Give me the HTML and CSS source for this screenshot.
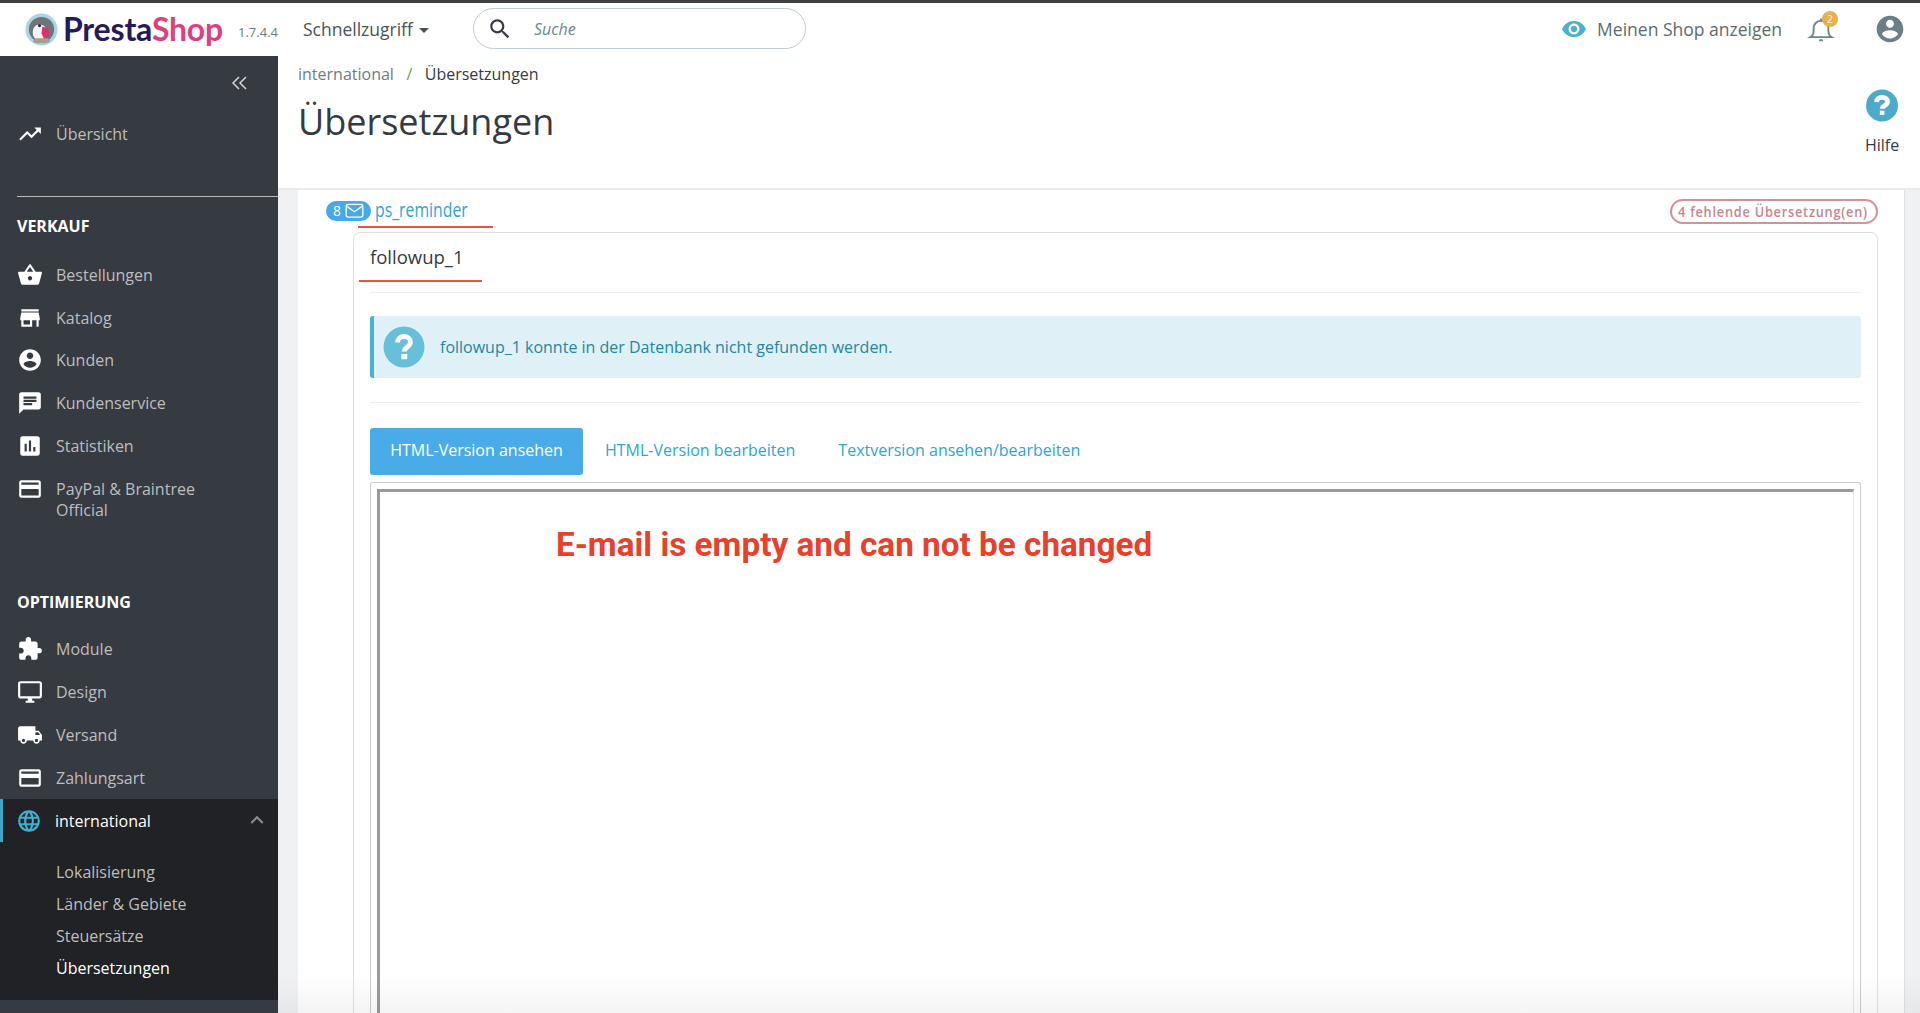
FILE: index.html
```html
<!DOCTYPE html>
<html lang="de">
<head>
<meta charset="utf-8">
<title>Übersetzungen</title>
<link rel="stylesheet" href="styles.css">
</head>
<body>
<div class="topline"></div>
<header class="header">
  <a class="logo">
    <svg class="logo-bird" viewBox="0 0 34 34">
      <circle cx="17" cy="17" r="16.5" fill="#a6d6e6"/>
      <circle cx="17" cy="17" r="13" fill="#6f7479"/>
      <path d="M8 20c0-6 4-9 9-8 3 .5 5 3 5 6l-2 8-6 2c-4-1-6-4-6-8z" fill="#f4f4f2"/>
      <path d="M18 14l6 2 1 7-5 4-3-6z" fill="#d9306f"/>
      <path d="M8 29c3 3 14 3 18 0l-3-3H11z" fill="#a89f86"/>
      <circle cx="15" cy="13" r="1.6" fill="#2a2a3a"/>
    </svg>
    <span class="logo-text"><span class="logo-presta">Presta</span><span class="logo-shop">Shop</span></span>
  </a>
  <span class="version">1.7.4.4</span>
  <span class="quick">Schnellzugriff<i class="caret"></i></span>
  <div class="search">
    <svg class="search-icon" viewBox="0 0 24 24"><path d="M15.5 14h-.79l-.28-.27C15.41 12.59 16 11.11 16 9.5 16 5.91 13.09 3 9.5 3S3 5.91 3 9.5 5.91 16 9.5 16c1.61 0 3.09-.59 4.23-1.57l.27.28v.79l5 4.99L20.49 19l-4.99-5zm-6 0C7.01 14 5 11.99 5 9.5S7.01 5 9.5 5 14 7.01 14 9.5 11.99 14 9.5 14z"/></svg>
    <span class="search-text">Suche</span>
  </div>
  <div class="header-right">
    <svg class="eye" viewBox="0 0 24 24"><path d="M12 4.5C7 4.5 2.73 7.61 1 12c1.73 4.39 6 7.5 11 7.5s9.27-3.11 11-7.5c-1.73-4.39-6-7.5-11-7.5zM12 17c-2.76 0-5-2.24-5-5s2.24-5 5-5 5 2.24 5 5-2.24 5-5 5zm0-8c-1.66 0-3 1.34-3 3s1.34 3 3 3 3-1.34 3-3-1.34-3-3-3z"/></svg>
    <span class="shop-link">Meinen Shop anzeigen</span>
    <span class="bell">
      <svg viewBox="0 0 24 24"><path d="M3.5 18.5c1.6-1 2.6-2.4 2.6-5.2v-2c0-3.2 2.4-5.8 5.9-5.8s5.900 2.600 5.900 5.800v2c0 2.800 1 4.200 2.600 5.200zM10.500 21h3M12 5.500V3.500"/></svg>
      <span class="bell-badge">2</span>
    </span>
    <svg class="user" viewBox="0 0 24 24"><path d="M12 2C6.48 2 2 6.48 2 12s4.48 10 10 10 10-4.48 10-10S17.52 2 12 2zm0 3c1.66 0 3 1.34 3 3s-1.34 3-3 3-3-1.34-3-3 1.34-3 3-3zm0 14.2c-2.5 0-4.71-1.28-6-3.22.03-1.99 4-3.08 6-3.08 1.99 0 5.97 1.09 6 3.08-1.29 1.94-3.5 3.22-6 3.22z"/></svg>
  </div>
</header>
<div class="layout">
  <aside class="sidebar">
    <div class="collapse">
      <svg viewBox="0 0 18 14"><path d="M8 1L2 7l6 6M15 1L9 7l6 6"/></svg>
    </div>
    <a class="item"><svg class="ico" viewBox="0 0 24 24"><path d="M16 6l2.29 2.29-4.88 4.88-4-4L2 16.59 3.41 18l6-6 4 4 6.3-6.29L22 12V6z"/></svg><span>Übersicht</span></a>
    <div class="section first">VERKAUF</div>
    <a class="item"><svg class="ico" viewBox="0 0 24 24"><path d="M17.21 9l-4.38-6.56c-.19-.28-.51-.42-.83-.42-.32 0-.64.14-.83.43L6.79 9H2c-.55 0-1 .45-1 1 0 .09.01.18.04.27l2.54 9.27c.23.84 1 1.46 1.92 1.46h13c.92 0 1.69-.62 1.93-1.46l2.54-9.27L23 10c0-.55-.45-1-1-1h-4.79zM9 9l3-4.4L15 9H9zm3 8c-1.1 0-2-.9-2-2s.9-2 2-2 2 .9 2 2-.9 2-2 2z"/></svg><span>Bestellungen</span></a>
    <a class="item"><svg class="ico" viewBox="0 0 24 24"><path d="M20 4H4v2h16V4zm1 10v-2l-1-5H4l-1 5v2h1v6h10v-6h4v6h2v-6h1zm-9 4H6v-4h6v4z"/></svg><span>Katalog</span></a>
    <a class="item"><svg class="ico" viewBox="0 0 24 24"><path d="M12 2C6.48 2 2 6.48 2 12s4.48 10 10 10 10-4.48 10-10S17.52 2 12 2zm0 3c1.66 0 3 1.34 3 3s-1.34 3-3 3-3-1.34-3-3 1.34-3 3-3zm0 14.2c-2.5 0-4.71-1.28-6-3.22.03-1.99 4-3.08 6-3.08 1.99 0 5.97 1.09 6 3.08-1.29 1.94-3.5 3.22-6 3.22z"/></svg><span>Kunden</span></a>
    <a class="item"><svg class="ico" viewBox="0 0 24 24"><path d="M20 2H4c-1.1 0-1.99.9-1.99 2L2 22l4-4h14c1.1 0 2-.9 2-2V4c0-1.1-.9-2-2-2zM6 9h12v2H6V9zm8 5H6v-2h8v2zm4-6H6V6h12v2z"/></svg><span>Kundenservice</span></a>
    <a class="item"><svg class="ico" viewBox="0 0 24 24"><path d="M19 3H5c-1.1 0-2 .9-2 2v14c0 1.1.9 2 2 2h14c1.1 0 2-.9 2-2V5c0-1.1-.9-2-2-2zM9 17H7v-7h2v7zm4 0h-2V7h2v10zm4 0h-2v-4h2v4z"/></svg><span>Statistiken</span></a>
    <a class="item item-wrap"><svg class="ico" viewBox="0 0 24 24"><path d="M20 4H4c-1.11 0-1.99.89-1.99 2L2 18c0 1.11.89 2 2 2h16c1.11 0 2-.89 2-2V6c0-1.11-.89-2-2-2zm0 14H4v-6h16v6zm0-10H4V6h16v2z"/></svg><span>PayPal &amp; Braintree<br>Official</span></a>
    <div class="section second">OPTIMIERUNG</div>
    <a class="item"><svg class="ico" viewBox="0 0 24 24"><path d="M20.5 11H19V7c0-1.1-.9-2-2-2h-4V3.5C13 2.12 11.88 1 10.5 1S8 2.12 8 3.5V5H4c-1.1 0-1.99.9-1.99 2v3.8H3.5c1.49 0 2.7 1.21 2.7 2.7s-1.21 2.7-2.7 2.7H2V20c0 1.1.9 2 2 2h3.8v-1.5c0-1.49 1.21-2.7 2.7-2.7 1.49 0 2.7 1.21 2.7 2.7V22H17c1.1 0 2-.9 2-2v-4h1.5c1.38 0 2.5-1.12 2.5-2.5S21.88 11 20.5 11z"/></svg><span>Module</span></a>
    <a class="item"><svg class="ico" viewBox="0 0 24 24"><path d="M21 2H3c-1.1 0-2 .9-2 2v12c0 1.1.9 2 2 2h7v2H8v2h8v-2h-2v-2h7c1.1 0 2-.9 2-2V4c0-1.1-.9-2-2-2zm0 14H3V4h18v12z"/></svg><span>Design</span></a>
    <a class="item"><svg class="ico" viewBox="0 0 24 24"><path d="M20 8h-3V4H3c-1.1 0-2 .9-2 2v11h2c0 1.66 1.34 3 3 3s3-1.34 3-3h6c0 1.66 1.34 3 3 3s3-1.34 3-3h2v-5l-3-4zM6 18.5c-.83 0-1.5-.67-1.5-1.5s.67-1.5 1.5-1.5 1.5.67 1.5 1.5-.67 1.5-1.5 1.5zm13.5-9l1.96 2.5H17V9.5h2.5zm-1.5 9c-.83 0-1.5-.67-1.5-1.5s.67-1.5 1.5-1.5 1.5.67 1.5 1.5-.67 1.5-1.5 1.5z"/></svg><span>Versand</span></a>
    <a class="item"><svg class="ico" viewBox="0 0 24 24"><path d="M20 4H4c-1.11 0-1.99.89-1.99 2L2 18c0 1.11.89 2 2 2h16c1.11 0 2-.89 2-2V6c0-1.11-.89-2-2-2zm0 14H4v-6h16v6zm0-10H4V6h16v2z"/></svg><span>Zahlungsart</span></a>
    <div class="active-group">
      <a class="item item-active"><svg class="ico ico-blue" viewBox="0 0 24 24"><path d="M11.99 2C6.47 2 2 6.48 2 12s4.47 10 9.99 10C17.52 22 22 17.52 22 12S17.52 2 11.99 2zm6.93 6h-2.95c-.32-1.25-.78-2.45-1.38-3.56 1.84.63 3.37 1.91 4.33 3.56zM12 4.04c.83 1.2 1.48 2.53 1.91 3.96h-3.82c.43-1.43 1.08-2.76 1.91-3.96zM4.26 14C4.1 13.36 4 12.69 4 12s.1-1.36.26-2h3.38c-.08.66-.14 1.32-.14 2 0 .68.06 1.34.14 2H4.26zm.82 2h2.95c.32 1.25.78 2.45 1.38 3.56-1.84-.63-3.37-1.9-4.33-3.56zm2.95-8H5.08c.96-1.66 2.49-2.93 4.33-3.56C8.81 5.55 8.35 6.75 8.03 8zM12 19.96c-.83-1.2-1.48-2.53-1.91-3.96h3.82c-.43 1.43-1.08 2.76-1.91 3.96zM14.34 14H9.66c-.09-.66-.16-1.32-.16-2 0-.68.07-1.35.16-2h4.68c.09.65.16 1.32.16 2 0 .68-.07 1.34-.16 2zm.25 5.56c.6-1.11 1.06-2.31 1.38-3.56h2.95c-.96 1.65-2.49 2.93-4.33 3.56zM16.36 14c.08-.66.14-1.32.14-2 0-.68-.06-1.34-.14-2h3.38c.16.64.26 1.31.26 2s-.1 1.36-.26 2h-3.38z"/></svg><span>international</span>
        <svg class="chev" viewBox="0 0 24 24"><path d="M12 8l-6 6 1.41 1.41L12 10.83l4.59 4.58L18 14z"/></svg></a>
      <ul class="submenu">
        <li>Lokalisierung</li>
        <li>Länder &amp; Gebiete</li>
        <li>Steuersätze</li>
        <li class="current">Übersetzungen</li>
      </ul>
    </div>
    <a class="item"><svg class="ico" viewBox="0 0 24 24"><path d="M20 4H4c-1.11 0-1.99.89-1.99 2L2 18c0 1.11.89 2 2 2h16c1.11 0 2-.89 2-2V6c0-1.11-.89-2-2-2zm0 14H4V6h16v12z"/></svg></a>
  </aside>
  <main class="main">
    <div class="toolbar">
      <div class="titles">
        <div class="crumbs"><span class="crumb">international</span><span class="slash">/</span><span class="crumb-current">Übersetzungen</span></div>
        <h1 class="page-title">Übersetzungen</h1>
      </div>
      <div class="help">
        <svg class="help-icon" viewBox="0 0 32 32"><circle cx="16" cy="16" r="16"/><path class="qm" d="M10.6 12.400c.3-3 2.600-4.600 5.500-4.600 3 0 5.400 1.700 5.400 4.400 0 3.800-5.300 3.600-5.300 7"/><rect class="qd" x="13.800" y="21.200" width="4.600" height="4.200"/></svg>
        <span>Hilfe</span>
      </div>
    </div>
    <div class="content">
      <section class="panel">
        <div class="mod-head">
          <span class="mail-badge">8<svg viewBox="0 0 24 24"><rect x="2.500" y="5" width="19" height="14.500" rx="2"/><path d="M3 7l9 6.500L21 7"/></svg></span>
          <span class="mod-name">ps_reminder</span>
          <span class="missing"><span>4 fehlende Übersetzung(en)</span></span>
        </div>
        <div class="mod-rule"></div>
        <div class="card">
          <div class="card-title">followup_1</div>
          <hr class="rule">
          <div class="alert">
            <svg class="alert-icon" viewBox="0 0 42 42"><circle cx="21" cy="21" r="20.500"/><path class="qm" d="M14.500 16.500c.3-4 3-6 6.500-6 3.600 0 6.500 2.200 6.500 5.600 0 5-6.200 4.800-6.200 9.400"/><rect class="qd" x="18.400" y="28" width="5.800" height="5.200"/></svg>
            <span>followup_1 konnte in der Datenbank nicht gefunden werden.</span>
          </div>
          <hr class="rule rule-2">
          <div class="tabs">
            <span class="tab tab-active">HTML-Version ansehen</span>
            <span class="tab tab-2">HTML-Version bearbeiten</span>
            <span class="tab tab-3">Textversion ansehen/bearbeiten</span>
          </div>
          <div class="frame">
            <div class="frame-inner">
              <p class="empty"><span>E-mail is empty and can not be changed</span></p>
            </div>
          </div>
        </div>
      </section>
    </div>
    <div class="fade"></div>
  </main>
</div>
</body>
</html>
```
FILE: styles.css
```css
* { box-sizing: border-box; }
html, body { margin: 0; height: 1013px; overflow: hidden; }
body { font-family: "Open Sans", sans-serif; font-size: 16px; color: #363a41; background: #fff; }
a { display: flex; text-decoration: none; color: inherit; }

.topline { height: 3px; background: #3f3f40; }

.header { height: 53px; display: flex; align-items: center; background: #fff; padding-bottom: 2px; }
.logo { width: 233px; padding-left: 25px; align-items: center; flex: none; }
.logo-bird { width: 33px; height: 33px; flex: none; margin-right: 5px; margin-top: 1px; }
.logo-text { font-family: Lato, sans-serif; font-weight: 700; font-size: 32px; line-height: 40px; letter-spacing: -0.2px; }
.logo-presta { color: #251b5b; }
.logo-shop { color: #df3f7e; }
.version { width: 70px; padding-left: 5px; font-size: 13px; color: #6c7a80; margin-top: 7px; flex: none; }
.quick { width: 170px; font-size: 17.5px; color: #4a5358; flex: none; display: flex; align-items: center; }
.caret { width: 0; height: 0; margin-left: 6px; margin-top: 4px; border-left: 5px solid transparent; border-right: 5px solid transparent; border-top: 5px solid #4a5358; }
.search { width: 333px; height: 41px; border: 1px solid #bbcdd2; border-radius: 21px; display: flex; align-items: center; flex: none; padding-left: 13px; }
.search-icon { width: 26px; height: 26px; fill: #363a41; flex: none; }
.search-text { font-style: italic; color: #6c868e; margin-left: 21px; }
.header-right { margin-left: auto; display: flex; align-items: center; padding-right: 14px; }
.eye { width: 26px; height: 26px; fill: #4ab0cf; }
.shop-link { font-size: 17.5px; color: #5c6a70; margin-left: 10px; }
.bell { position: relative; display: block; width: 30px; height: 30px; margin-left: 24px; }
.bell svg { width: 30px; height: 30px; fill: none; stroke: #6c868e; stroke-width: 1.5; display: block; }
.bell-badge { position: absolute; top: -3px; right: -2px; width: 16px; height: 16px; border-radius: 50%; background: #e8b04b; color: #fff; font-size: 11px; line-height: 16px; text-align: center; }
.user { width: 32px; height: 32px; fill: #6c7f88; margin-left: 38px; }

.layout { display: flex; height: 957px; }

.sidebar { width: 278px; flex: none; background: #363a41; overflow: hidden; color: #bebebe; }
.collapse { height: 57px; display: flex; justify-content: flex-end; align-items: center; padding-right: 29px; padding-bottom: 3px; }
.collapse svg { width: 18px; height: 14px; fill: none; stroke: #d5d5d5; stroke-width: 1.5; }
.item { height: 42.85px; align-items: center; padding-left: 17px; position: relative; }
.ico { width: 26px; height: 26px; fill: #fff; flex: none; margin-right: 13px; }
.section { color: #fff; font-weight: 700; font-size: 16px; line-height: 20px; padding-left: 17px; }
.section.first { margin: 40px 0 17.5px; padding-top: 20px; background: linear-gradient(#b8b8bc, #b8b8bc) 17px 0 / 261px 1px no-repeat; }
.section.second { margin: 60.5px 0 16px; }
.item-wrap { height: 64px; align-items: flex-start; padding-top: 8px; }
.item-wrap span { line-height: 21.5px; margin-top: 3px; }
.active-group { background: #202226; height: 201px; }
.item-active { color: #fff; box-shadow: inset 3px 0 0 #3ba7c9; padding-left: 16px; }
.item-active .ico { margin-right: 13px; }
.ico-blue { fill: #3fb1d0; }
.chev { width: 26px; height: 26px; fill: #8a8d92; position: absolute; right: 8px; top: 8px; }
.submenu { list-style: none; margin: 14px 0 0; padding: 0 0 0 56px; }
.submenu li { height: 32px; line-height: 32px; }
.submenu .current { color: #fff; }

.main { flex: 1; min-width: 0; display: flex; flex-direction: column; position: relative; }
.toolbar { height: 134px; flex: none; border-bottom: 2px solid #e8eaec; display: flex; justify-content: space-between; padding: 6px 20px 0 20px; background: #fff; }
.crumbs { height: 24px; line-height: 24px; }
.crumb { color: #6c7c82; }
.slash { color: #7b9a50; margin: 0 12.5px; }
.crumb-current { color: #363a41; }
.page-title { margin: 11px 0 0; font-size: 36px; font-weight: 400; line-height: 50px; color: #363a41; }
.help { width: 36px; display: flex; flex-direction: column; align-items: center; padding-top: 27px; font-size: 16px; color: #363a41; }
.help-icon { width: 32px; height: 33px; flex: none; margin-bottom: 12px; fill: #4cabcb; }
.qm { fill: none; stroke: #fff; stroke-width: 4.8; }
.qd { fill: #fff; stroke: none; }

.content { flex: 1; min-height: 0; background: #f0f1f3; padding: 0 15px 0 20px; }
.panel { height: 100%; background: #fff; padding: 0 26px 0 28px; overflow: hidden; border-right: 1px solid #dfe1e3; }
.mod-head { height: 36px; display: flex; align-items: center; padding-top: 5px; }
.mail-badge { width: 45px; height: 20px; border-radius: 10px; background: #46a9e8; color: #fff; font-size: 14px; display: flex; align-items: center; padding-left: 7px; gap: 3px; flex: none; }
.mail-badge svg { width: 21px; height: 21px; fill: none; stroke: #fff; stroke-width: 1.5; }
.mod-name { color: #2ea5d6; font-size: 20px; line-height: 24px; margin-left: 4px; display: inline-block; transform: scaleX(.79); transform-origin: 0 50%; margin-top: -2px; font-weight: 500; }
.missing { margin-left: auto; height: 25px; width: 208px; border: 2.5px solid #d2929b; border-radius: 13px; color: #c7858e; font-size: 15px; font-weight: 600; line-height: 20px; white-space: nowrap; padding-left: 6px; margin-top: 2px; }
.missing span { display: inline-block; transform: scaleX(.85); transform-origin: 0 50%; letter-spacing: .9px; }
.mod-rule { width: 135px; height: 2px; background: #e8533f; margin: 0 0 4px 32px; }

.card { margin-left: 27px; border: 1px solid #dfe1e3; border-bottom: 0; border-radius: 7px 7px 0 0; padding: 0 16px; height: 900px; }
.card-title { width: 123px; margin-left: -11px; padding-left: 11px; height: 49px; border-bottom: 2px solid #e8533f; font-size: 18.5px; line-height: 48px; color: #363a41; }
.rule { border: 0; border-top: 1px solid #eceeef; margin: 10px 0 23px; }
.rule-2 { margin: 24px 0 25px; }
.alert { height: 62px; background: #dff1f7; border-left: 4px solid #49b2d3; border-radius: 3px; display: flex; align-items: center; padding-left: 9px; color: #25869f; font-size: 16px; }
.alert-icon { width: 42px; height: 42px; flex: none; fill: #68bfda; margin-right: 15px; }
.tabs { display: flex; height: 47px; }
.tab { line-height: 45.5px; font-size: 16px; color: #2ea5d6; white-space: nowrap; }
.tab-active { width: 213px; background: #49ace9; color: #fff; border-radius: 3px; text-align: center; }
.tab-2 { margin-left: 22px; }
.tab-3 { margin-left: 43px; }
.frame { margin-top: 7px; border: 1px solid #c9ccce; border-bottom: 0; border-radius: 3px 3px 0 0; padding: 6px 6px 0 6px; height: 600px; }
.frame-inner { height: 100%; border-top: 3px solid #9a9a9a; border-left: 3px solid #9a9a9a; border-right: 1px solid #e6e6e6; }
.empty { margin: 0; padding: 31px 0 0 176px; color: #e8402a; font-family: Roboto, sans-serif; font-weight: 700; font-size: 33.3px; line-height: 44px; white-space: nowrap; }
.fade { position: absolute; left: 0; right: 0; bottom: 0; height: 40px; background: linear-gradient(rgba(0,0,0,0), rgba(0,0,0,.045)); pointer-events: none; }
```
